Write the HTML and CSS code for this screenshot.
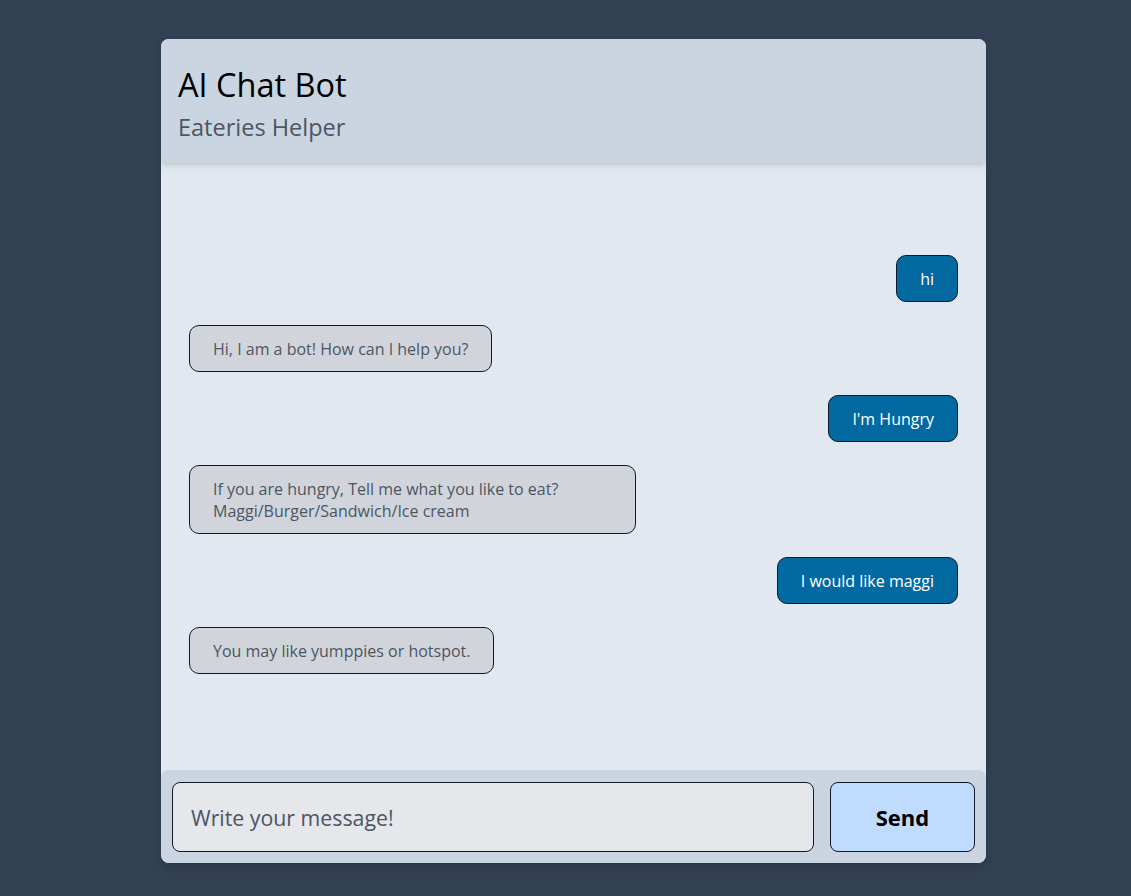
FILE: index.html
```html
<!DOCTYPE html>
<html lang="en">
<head>
<meta charset="utf-8">
<title>AI Chat Bot</title>
<link rel="stylesheet" href="styles.css">
</head>
<body>
<div class="page">
  <div class="card">
    <header class="head">
      <h1 class="title">AI Chat Bot</h1>
      <p class="subtitle">Eateries Helper</p>
    </header>
    <main class="messages">
      <div class="msg user">hi</div>
      <div class="msg bot">Hi, I am a bot! How can I help you?</div>
      <div class="msg user">I'm Hungry</div>
      <div class="msg bot">If you are hungry, Tell me what you like to eat? Maggi/Burger/Sandwich/Ice cream</div>
      <div class="msg user">I would like maggi</div>
      <div class="msg bot">You may like yumppies or hotspot.</div>
    </main>
    <footer class="composer">
      <input class="field" type="text" placeholder="Write your message!">
      <button class="send" type="button">Send</button>
    </footer>
  </div>
</div>
</body>
</html>
```

FILE: styles.css
```css
* { box-sizing: border-box; }
html, body { margin: 0; padding: 0; }
body {
  background: #334155;
  font-family: "Open Sans", "Noto Sans", sans-serif;
  height: 896px;
}
.page {
  display: flex;
  justify-content: center;
  padding: 39px 0 0 16px;
}
.card {
  width: 825px;
  height: 824px;
  display: flex;
  flex-direction: column;
  background: #e2e8f0;
  border-radius: 8px;
  overflow: hidden;
  box-shadow: 0 4px 10px rgba(0,0,0,0.15);
}
.head {
  background: #cbd5e1;
  height: 124px;
  padding: 23px 17px 0;
  box-shadow: 0 4px 6px -1px rgba(0,0,0,0.1), 0 2px 4px -2px rgba(0,0,0,0.1);
  position: relative;
  z-index: 1;
}
.title {
  margin: 0;
  font-size: 32.5px;
  font-weight: 400;
  line-height: 45px;
  color: #000;
}
.subtitle {
  margin: 0;
  font-size: 23.5px;
  line-height: 40px;
  color: #4b5563;
}
.messages {
  flex: 1;
  display: flex;
  flex-direction: column;
  gap: 23px;
  padding: 92px 28px 0;
}
.msg {
  border: 1px solid #111827;
  border-radius: 10px;
  padding: 11.5px 23px;
  font-size: 16px;
  line-height: 22px;
  max-width: 447px;
}
.user {
  align-self: flex-end;
  background: #0369a1;
  color: #fff;
}
.bot {
  align-self: flex-start;
  background: #d1d5db;
  color: #4b5563;
}
.composer {
  background: #cbd5e1;
  border-radius: 8px;
  height: 93px;
  display: flex;
  gap: 16px;
  padding: 12px 11px 11px;
}
.field {
  flex: 1;
  height: 70px;
  border: 1px solid #111827;
  border-radius: 8px;
  background: #e5e7eb;
  padding: 0 18px;
  font-family: inherit;
  font-size: 21.3px;
  color: #111827;
  outline: none;
}
.field::placeholder { color: #4b5563; }
.send {
  width: 145px;
  height: 70px;
  border: 1px solid #111827;
  border-radius: 8px;
  background: #bfdbfe;
  font-family: inherit;
  font-size: 22px;
  font-weight: 700;
  color: #000;
}
```
